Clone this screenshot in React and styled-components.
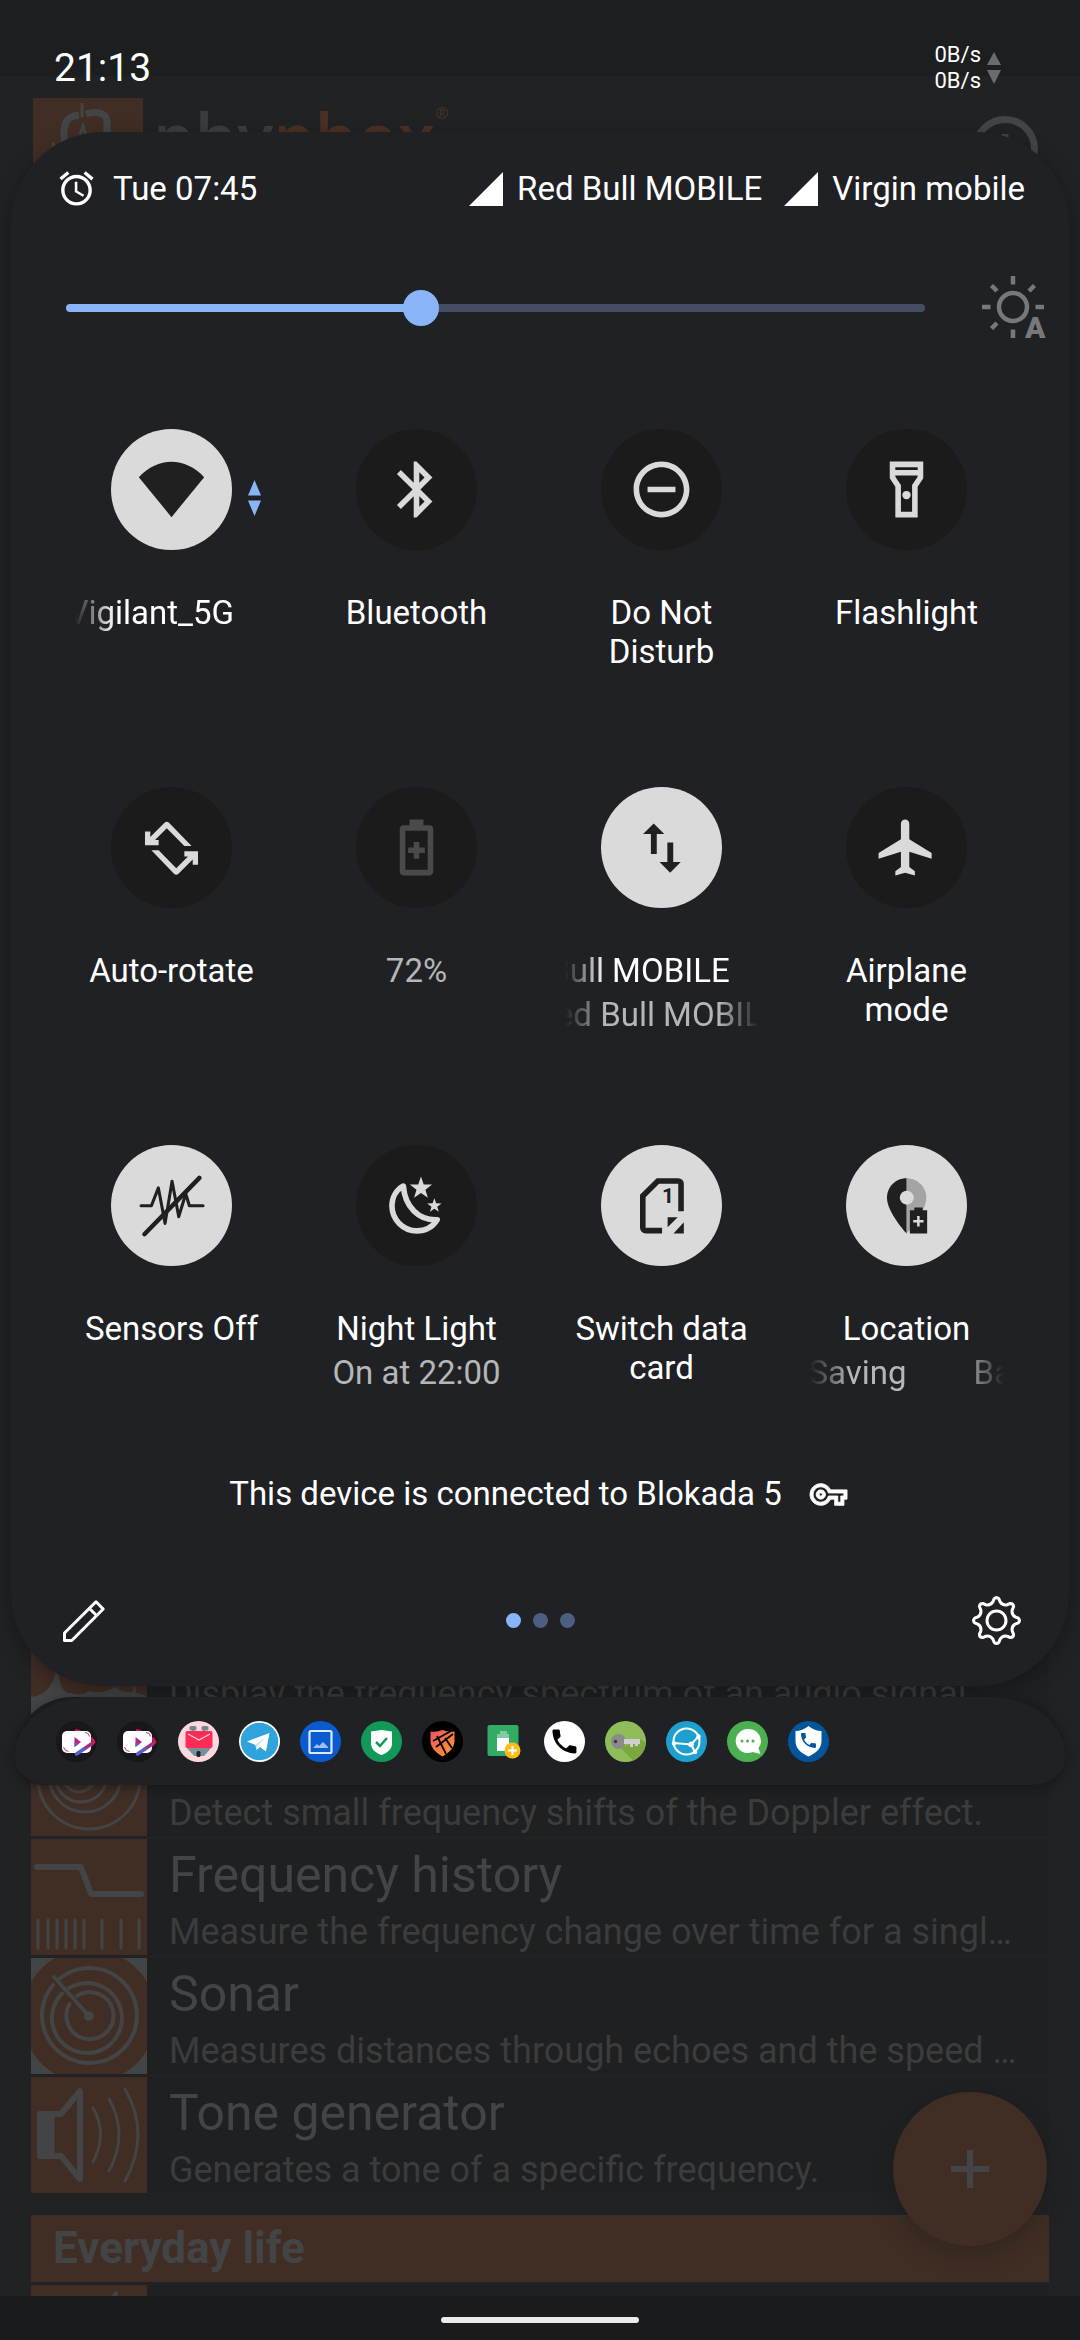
import React, { useState } from "react";
import styled, { createGlobalStyle } from "styled-components";

const c = {
  app: "#202223",
  card: "#1f2021",
  bar: "#1c1e1f",
  nav: "#1a1b1c",
  panel: "#202124",
  orange: "#402e24",
  dimTitle: "#434445",
  dimText: "#3b3c3d",
  accent: "#8ab4f8",
  on: "#dadada",
  off: "#1b1b1c",
  ink: "#202020",
};

const GlobalStyle = createGlobalStyle`
  * { box-sizing: border-box; }
  body {
    margin: 0;
    background: ${c.app};
    color: #fff;
    font-family: Roboto, "Noto Sans", sans-serif;
  }
  button, input { font: inherit; color: inherit; }
  svg { display: block; flex: none; overflow: visible; }
`;

const Screen = styled.div`
  position: relative;
  display: grid;
  grid-template-columns: minmax(0, 1fr);
  min-height: 100vh;
  overflow: hidden;
`;

/* ---------- App behind the shade ---------- */

const AppLayer = styled.div`
  display: flex;
  flex-direction: column;
  justify-content: space-between;
  background: ${c.app};
`;

const StatusBackdrop = styled.div`
  height: 76px;
  background: ${c.bar};
`;

const AppHeader = styled.header`
  display: flex;
  align-items: flex-start;
  gap: 10px;
  padding: 22px 42px 0 33px;
`;

const Brand = styled.h1`
  flex: 1;
  display: flex;
  margin: 0;
  font: 600 67px/76px "Open Sans", sans-serif;
  color: ${c.dimText};
`;

const BrandAccent = styled.span`
  color: #4a3024;
`;

const BrandMark = styled.span`
  font-size: 16px;
  line-height: 30px;
  color: #4a3024;
`;

const InfoButton = styled.button`
  margin-top: 18px;
  padding: 0;
  border: 0;
  background: none;
`;

const Experiments = styled.ul`
  display: flex;
  flex-direction: column;
  gap: 3px;
  margin: 0;
  padding: 0 31px;
  list-style: none;
`;

const Experiment = styled.li`
  display: flex;
  gap: 22px;
  height: ${(p) => (p.$peek ? 11 : 116)}px;
  overflow: hidden;
  background: ${c.card};
`;

const ExperimentText = styled.div`
  flex: 1;
  min-width: 0;
  padding: 6px 20px 0 0;
`;

const ExperimentTitle = styled.h3`
  margin: 0;
  font-size: 50px;
  line-height: 60px;
  font-weight: 400;
  color: ${c.dimTitle};
`;

const ExperimentInfo = styled.p`
  margin: 0;
  font-size: 36px;
  line-height: 54px;
  color: ${c.dimText};
  white-space: nowrap;
  overflow: hidden;
  text-overflow: ellipsis;
`;

const SectionTitle = styled.h2`
  margin: 19px 0 0;
  padding: 0 22px;
  font-size: 44px;
  line-height: 67px;
  font-weight: 700;
  color: ${c.dimTitle};
  background: ${c.orange};
`;

const SectionItem = styled.li``;

const AddButton = styled.button`
  position: absolute;
  right: 33px;
  bottom: 94px;
  display: grid;
  place-items: center;
  width: 154px;
  height: 154px;
  padding: 0;
  border: 0;
  border-radius: 50%;
  background: ${c.orange};
  box-shadow: 0 10px 22px rgba(20, 20, 20, 0.3);
`;

const NavBar = styled.div`
  display: flex;
  justify-content: center;
  align-items: center;
  height: 44px;
  padding-top: 4px;
  background: ${c.nav};
`;

const NavHandle = styled.div`
  width: 198px;
  height: 6px;
  border-radius: 3px;
  background: #ececec;
`;

/* ---------- Shade ---------- */

const Shade = styled.main`
  position: absolute;
  inset: 0;
  display: flex;
  flex-direction: column;
  padding: 0 11px;
`;

const StatusRow = styled.div`
  display: flex;
  justify-content: space-between;
  align-items: center;
  height: 132px;
  padding: 4px 68px 0 43px;
`;

const Clock = styled.time`
  font-size: 39px;
  line-height: 46px;
`;

const Traffic = styled.div`
  display: flex;
  align-items: center;
  gap: 6px;
  font-size: 22px;
  line-height: 26px;
`;

const Panel = styled.section`
  padding: 36px 0 41px;
  border-radius: 92px;
  background: ${c.panel};
  box-shadow: 0 6px 18px rgba(10, 10, 12, 0.35);
  font-size: 33px;
  line-height: 40px;
`;

const PanelHeader = styled.header`
  display: flex;
  justify-content: space-between;
  align-items: center;
  padding: 0 44px 0 45px;
`;

const Inline = styled.div`
  display: flex;
  align-items: center;
  gap: ${(p) => p.$gap}px;
`;

const BrightnessRow = styled.div`
  display: flex;
  align-items: center;
  gap: 57px;
  padding: 67px 24px 90px 55px;
`;

const Brightness = styled.input`
  flex: 1;
  min-width: 0;
  height: 36px;
  margin: 0;
  appearance: none;
  background: none;

  &::-webkit-slider-runnable-track {
    height: 8px;
    border-radius: 4px;
    background: linear-gradient(
      to right,
      ${c.accent} ${(p) => p.value}%,
      #444d63 ${(p) => p.value}%
    );
  }

  &::-webkit-slider-thumb {
    appearance: none;
    width: 36px;
    height: 36px;
    margin-top: -14px;
    border-radius: 50%;
    background: ${c.accent};
  }
`;

const IconButton = styled.button`
  display: grid;
  place-items: center;
  min-width: 49px;
  padding: 0;
  border: 0;
  background: none;
  justify-self: ${(p) => p.$align || "auto"};
`;

const Tiles = styled.div`
  display: grid;
  grid-template-columns: repeat(4, 1fr);
  row-gap: 111px;
  padding: 0 40px 0 38px;
`;

const TileButton = styled.button`
  display: flex;
  flex-direction: column;
  align-items: center;
  justify-content: flex-start;
  gap: 43px;
  min-width: 0;
  min-height: 247px;
  padding: 0;
  border: 0;
  background: none;
`;

const TileDisc = styled.span`
  position: relative;
  display: grid;
  place-items: center;
  width: 121px;
  height: 121px;
  border-radius: 50%;
  background: ${(p) => (p.$on ? c.on : c.off)};
  color: ${(p) => (p.$dim ? "#4a4a4b" : p.$on ? c.ink : c.on)};
`;

const Activity = styled.span`
  position: absolute;
  left: 137px;
  top: 51px;
  color: ${c.accent};
`;

const TileText = styled.span`
  display: flex;
  flex-direction: column;
  gap: 5px;
  width: 194px;
`;

const TileLabel = styled.span`
  line-height: 39px;
  color: ${(p) => (p.$muted ? "#b5b6b7" : "#fff")};
`;

const fades = {
  left: "linear-gradient(to right, transparent, #000 40px)",
  both: "linear-gradient(to right, transparent, #000 40px, #000 calc(100% - 40px), transparent)",
};

const Marquee = styled(TileLabel)`
  display: flex;
  overflow: hidden;
  white-space: nowrap;
  mask-image: ${(p) => fades[p.$fade]};
`;

const MarqueeTrack = styled.span`
  display: flex;
  flex: none;
  gap: 67px;
  margin-left: -${(p) => p.$scrolled}px;
`;

const VpnNote = styled.button`
  display: flex;
  justify-content: center;
  align-items: center;
  gap: 28px;
  width: 100%;
  margin: 82px 0;
  padding: 0 4px 0 0;
  border: 0;
  background: none;
`;

const PanelFooter = styled.footer`
  display: grid;
  grid-template-columns: 1fr auto 1fr;
  align-items: center;
  padding: 0 48px;
`;

const Pages = styled.div`
  display: flex;
  gap: 12px;
`;

const PageDot = styled.span`
  width: 15px;
  height: 15px;
  border-radius: 50%;
  background: ${(p) => (p.$current ? c.accent : "#4d5f80")};
`;

const Tray = styled.section`
  margin: 11px 3px 0;
  border-radius: 60px 60px 30px 30px;
  background: #1b1c20;
  box-shadow: 0 3px 8px rgba(16, 16, 20, 0.5);
`;

const TrayIcons = styled.div`
  display: flex;
  align-items: center;
  gap: 20px;
  height: 88px;
  padding: 0 42px;
  border-radius: 76px 76px 36px 36px / 60px 60px 28px 28px;
  background: ${c.panel};
`;

/* ---------- Icons ---------- */

const Glyph = ({ size = 67, children }) => (
  <svg width={size} height={size} viewBox="0 0 24 24" fill="currentColor" aria-hidden="true">
    {children}
  </svg>
);

const starPoints = (cx, cy, r) =>
  Array.from({ length: 10 }, (_, i) => {
    const a = (Math.PI / 5) * i - Math.PI / 2;
    const d = i % 2 ? r * 0.4 : r;
    return `${(cx + d * Math.cos(a)).toFixed(2)},${(cy + d * Math.sin(a)).toFixed(2)}`;
  }).join(" ");

const polar = (cx, r, deg) => {
  const a = (deg * Math.PI) / 180;
  return `${(cx + r * Math.cos(a)).toFixed(2)} ${(cx + r * Math.sin(a)).toFixed(2)}`;
};

const gearPath = (() => {
  let d = "";
  for (let i = 0; i < 8; i++) {
    const a = i * 45 - 90;
    d += `${i ? "L" : "M"}${polar(24.5, 22, a - 6)}`;
    d += `Q${polar(24.5, 24, a)} ${polar(24.5, 22, a + 6)}`;
    d += `L${polar(24.5, 19, a + 11)}`;
    d += `Q${polar(24.5, 16, a + 22.5)} ${polar(24.5, 19, a + 34)}`;
  }
  return d + "Z";
})();

const AlarmIcon = () => (
  <Glyph size={41}>
    <path d="M22 5.72l-4.6-3.86-1.29 1.53 4.6 3.86L22 5.72zM7.88 3.39L6.6 1.86 2 5.71l1.29 1.53 4.59-3.85zM12.5 8H11v6l4.75 2.85.75-1.23-4-2.37V8zM12 4c-4.97 0-9 4.03-9 9s4.02 9 9 9c4.97 0 9-4.03 9-9s-4.03-9-9-9zm0 16c-3.87 0-7-3.13-7-7s3.13-7 7-7 7 3.13 7 7-3.13 7-7 7z" />
  </Glyph>
);

const SignalIcon = () => (
  <svg width="34" height="34" viewBox="0 0 34 34" aria-hidden="true">
    <path d="M34 0V34H0z" fill="#fff" />
  </svg>
);

const TrafficIcon = () => (
  <svg width="14" height="32" viewBox="0 0 14 32" fill="#6b6c6d" aria-hidden="true">
    <path d="M7 0l7 13H0zM0 18h14L7 32z" />
  </svg>
);

const ActivityIcon = () => (
  <svg width="13" height="36" viewBox="0 0 13 36" fill="currentColor" aria-hidden="true">
    <path d="M6.500 0L13 15.500H0zM0 20.500h13L6.500 36z" />
  </svg>
);

const AutoBrightnessIcon = () => (
  <svg width="63" height="63" viewBox="0 0 63 63" fill="none" stroke="#77787a" strokeWidth="4.500" aria-hidden="true">
    <circle cx="31" cy="31" r="14" />
    <path d="M31 0v8.500M31 53.500v8.500M0 31h8.500M53.500 31H62M9.500 9.500l5.500 5.500M52.500 9.500L47 15M9.500 52.500L15 47" />
    <text x="43" y="62" fontSize="30" fontWeight="900" fill="#77787a" stroke="none" fontFamily="Roboto, sans-serif">
      A
    </text>
  </svg>
);

const WifiIcon = () => (
  <Glyph>
    <path d="M12 21.900L.3 7.600C3.700 4 7.800 2.100 12 2.100S20.300 4 23.700 7.600z" />
  </Glyph>
);

const BluetoothIcon = () => (
  <Glyph>
    <path d="M17.71 7.71L12 2h-1v7.59L6.41 5 5 6.41 10.59 12 5 17.59 6.41 19 11 14.41V22h1l5.71-5.71-4.3-4.29 4.3-4.29zM13 5.83l1.88 1.88L13 9.59V5.83zm1.88 10.46L13 18.17v-3.76l1.88 1.88z" />
  </Glyph>
);

const DndIcon = () => (
  <Glyph>
    <path d="M12 2C6.480 2 2 6.480 2 12s4.480 10 10 10 10-4.480 10-10S17.520 2 12 2zm0 18c-4.410 0-8-3.590-8-8s3.590-8 8-8 8 3.590 8 8-3.590 8-8 8zM7 11h10v2H7z" />
  </Glyph>
);

const FlashlightIcon = () => (
  <Glyph>
    <path d="M6 2v6l2 3v11h8V11l2-3V2H6zm10 2v1H8V4h8zm-2 6.400V20h-4v-9.600l-2-3V7h8v.4l-2 3z" />
    <circle cx="12" cy="14" r="1.500" />
  </Glyph>
);

const rotateHalf =
  "M19.200 11.500h-2.600L10.300 5.100 6.100 9.300H7.400V11.200H2.500V6.300H4.400V8.200L9.500 3.100q.8-.7 1.600 0z";

const RotateIcon = () => (
  <Glyph>
    <path d={rotateHalf} />
    <path d={rotateHalf} transform="rotate(180 12 12.250)" />
  </Glyph>
);

const BatteryIcon = () => (
  <Glyph>
    <path d="M16.700 4H14.500V2h-5v2H7.300C6.600 4 6 4.600 6 5.300v15.400C6 21.400 6.600 22 7.300 22h9.400c.7 0 1.300-.6 1.300-1.300V5.300C18 4.600 17.400 4 16.700 4zM16 20H8V6h8v14zM11 16h2v-2h2v-2h-2v-2h-2v2H9v2h2z" />
  </Glyph>
);

const DataIcon = () => (
  <Glyph>
    <path d="M9.200 3.400L13 7.200H10.300V14.300H8.200V7.200H5.400zM15.100 21l3.800-3.800H16.200V10.200H14.100V17.200H11.300z" />
  </Glyph>
);

const AirplaneIcon = () => (
  <Glyph>
    <path d="M21 16v-2l-8-5V3.500c0-.83-.67-1.500-1.500-1.500S10 2.670 10 3.500V9l-8 5v2l8-2.500V19l-2 1.500V22l3.500-1 3.500 1v-1.500L13 19v-5.500l8 2.500z" />
  </Glyph>
);

const SensorsIcon = () => (
  <Glyph>
    <g fill="none" stroke="currentColor" strokeLinecap="round" strokeLinejoin="round">
      <path strokeWidth="1.100" d="M1.100 12.100H4.800L7.300 5.700 9.700 18.400 12.200 3.300 14.600 16 17.100 7.800 18.400 12.100H23.300" />
      <path strokeWidth="1.600" d="M2.300 22.300L22 2.100" />
    </g>
  </Glyph>
);

const NightIcon = () => (
  <Glyph>
    <path
      d="M7.300 5C4.700 6.400 3.200 9.200 3.200 12.100A9 9 0 0 0 12.100 21.100C15.300 21.100 17.900 19.500 19.400 17.100 12.800 17.400 7.800 12.400 7.300 5z"
      fill="none"
      stroke="currentColor"
      strokeWidth="2"
      strokeLinejoin="round"
    />
    <polygon points={starPoints(13.6, 5.8, 4.2)} />
    <polygon points={starPoints(18.4, 12.1, 2.7)} />
  </Glyph>
);

const SimIcon = () => (
  <Glyph>
    <path
      d="M12.200 21H6.300a1 1 0 0 1-1-1V8.600L10.700 3.200H18a1 1 0 0 1 1 1V14.100"
      fill="none"
      stroke="currentColor"
      strokeWidth="2"
    />
    <path d="M14.200 16.200h3.600l-3.600 3.600zM20 18v4h-3.700z" />
    <text x="12.200" y="11" fontSize="7.500" fontWeight="700" fontFamily="Roboto, sans-serif">
      1
    </text>
  </Glyph>
);

const LocationIcon = () => (
  <Glyph>
    <path d="M12 2.200c3.900 0 7.100 3.100 7.100 7C19.100 14.400 12 22 12 22z" fill="#a4a4a4" />
    <path d="M12 2.200C8.100 2.200 5 5.300 5 9.200 5 14.400 12 22 12 22z" />
    <circle cx="12.100" cy="9.200" r="2.500" fill={c.on} />
    <path d="M13.200 13.700h1.600v-1h3v1h1.600V22h-6.200z" />
    <path d="M15.800 15.800h.9v1.400h1.400v.9h-1.400v1.400h-.9v-1.400h-1.400v-.9h1.400z" fill={c.on} />
  </Glyph>
);

const KeyIcon = () => (
  <Glyph size={37}>
    <path
      stroke="currentColor"
      strokeWidth=".6"
      d="M22 19h-6v-4h-2.680c-1.140 2.420-3.600 4-6.320 4-3.860 0-7-3.140-7-7s3.140-7 7-7c2.720 0 5.170 1.580 6.320 4H24v6h-2v4zm-4-2h2v-4h2v-2H11.940l-.23-.67C11.010 8.340 9.110 7 7 7c-2.760 0-5 2.240-5 5s2.240 5 5 5c2.110 0 4.010-1.340 4.710-3.330l.23-.67H18v4zM7 15c-1.650 0-3-1.350-3-3s1.350-3 3-3 3 1.350 3 3-1.350 3-3 3zm0-4c-.55 0-1 .45-1 1s.45 1 1 1 1-.45 1-1-.45-1-1-1z"
    />
  </Glyph>
);

const PencilIcon = () => (
  <svg width="42" height="42" viewBox="0 0 42 42" fill="none" stroke="#fff" strokeWidth="3" strokeLinejoin="round" aria-hidden="true">
    <path d="M1.500 40.500V33L33 1.800 40.200 9 8.800 40.500zM26.500 8.500L33.500 15.500" />
  </svg>
);

const GearIcon = () => (
  <svg width="49" height="49" viewBox="0 0 49 49" fill="none" stroke="#fff" strokeWidth="3" strokeLinejoin="round" aria-hidden="true">
    <path d={gearPath} />
    <circle cx="24.500" cy="24.500" r="9.500" />
  </svg>
);

/* ---------- Notification icons ---------- */

const Badge = ({ fill, label, children }) => (
  <svg width="41" height="41" viewBox="0 0 41 41" role="img" aria-label={label}>
    {fill && <circle cx="20.500" cy="20.500" r="20.500" fill={fill} />}
    {children}
  </svg>
);

const VideoBadge = () => (
  <Badge fill="#18181a" label="Video">
    <path d="M19 9.500l5 1" stroke="#e0105a" strokeWidth="3" />
    <path d="M35 17l3 4-4 4" stroke="#e0104f" strokeWidth="3" fill="none" strokeLinejoin="round" />
    <rect x="6" y="10" width="29" height="22" rx="5" fill="#fff" />
    <path d="M29 11.500q4 0 4.500 4M7.500 26q1 4 5 4.500" stroke="#d03070" strokeWidth="1" fill="none" />
    <path d="M36 22.500L28 28" stroke="#a0308a" strokeWidth="3.500" strokeLinecap="round" />
    <path d="M28 28L20.500 33" stroke="#5560c8" strokeWidth="3.500" strokeLinecap="round" />
    <path d="M18.500 16l6.500 5-6.500 5z" fill="#c0247a" />
    <path d="M18.500 21v5l4-3z" fill="#4a60d0" />
  </Badge>
);

const MailBadge = () => (
  <Badge fill="#fbd8de" label="Mail">
    <path d="M15 8v4M26 8v4" stroke="#78909c" strokeWidth="2" />
    <rect x="11.500" y="5" width="7" height="4.500" rx="1.500" fill="#78858c" />
    <rect x="23.500" y="5" width="7" height="4.500" rx="1.500" fill="#78858c" />
    <path d="M8 26h26l-8 9H16z" fill="#78909c" />
    <rect x="7.500" y="10" width="27" height="17" rx="2" fill="#ff2b55" />
    <path d="M10 13l11 6 11-6" stroke="#fbd8de" strokeWidth="1.200" fill="none" />
    <rect x="18.500" y="30" width="4" height="6" rx="1.500" fill="#222" />
  </Badge>
);

const TelegramBadge = () => (
  <Badge fill="#fff" label="Telegram">
    <circle cx="20.500" cy="20.500" r="18.800" fill="#2fa3dc" />
    <path d="M8 20.500L30.500 12l-3.500 18.500-6-4.500-3.500 3-1-5z" fill="#fff" />
    <path d="M16.500 24L26.500 16l-8 9-1 4z" fill="#c4e0f0" />
  </Badge>
);

const GalleryBadge = () => (
  <Badge fill="#0b5bd0" label="Gallery">
    <rect x="9.500" y="10" width="22" height="22" rx="1.500" fill="none" stroke="#dce9ff" strokeWidth="2.200" />
    <path d="M13 27l4-4 2 2 4-4 5 5v1z" fill="#9cc2f5" />
  </Badge>
);

const ShieldBadge = () => (
  <Badge fill="#12995a" label="Protection">
    <path d="M20.500 9l10.500 1.500v12.500c0 5-5 9-10.500 11-5.500-2-10.500-6-10.500-11V10.500z" fill="#fff" />
    <path d="M15 21l4 4 7-8" stroke="#12995a" strokeWidth="2.500" fill="none" />
  </Badge>
);

const BlokadaBadge = () => (
  <Badge fill="#000" label="Blokada">
    <defs>
      <linearGradient id="flame" x1="0" y1="0" x2="1" y2="1">
        <stop offset="0" stopColor="#f0506a" />
        <stop offset="1" stopColor="#ffa01e" />
      </linearGradient>
    </defs>
    <path d="M8.500 10.500q6 1 12-1.500 6 2.500 12 1.500v9c0 7-5 12-12 16-7-4-12-9-12-16z" fill="url(#flame)" />
    <path d="M11 20L29 10M14 26L31 13M15 15l9 18M23 17l7 10" stroke="#000" strokeWidth="1.800" />
  </Badge>
);

const BatteryBadge = () => (
  <Badge label="Battery">
    <rect x="4.500" y="4" width="31" height="31" rx="2" fill="#33ab64" />
    <path d="M14 13h3v-3h7v3h2v5H14z" fill="#82cba0" />
    <rect x="14" y="17" width="12" height="13" fill="#fff" />
    <circle cx="29.500" cy="29.500" r="8" fill="#fdbc18" />
    <path d="M29.500 25v9M25 29.500h9" stroke="#fff" strokeWidth="2" />
  </Badge>
);

const handset =
  "M6.620 10.790c1.440 2.830 3.760 5.140 6.590 6.590l2.200-2.200c.27-.27.67-.36 1.020-.24 1.120.37 2.330.57 3.570.57.55 0 1 .45 1 1V20c0 .55-.45 1-1 1-9.390 0-17-7.610-17-17 0-.55.45-1 1-1h3.500c.55 0 1 .45 1 1 0 1.250.2 2.450.57 3.570.11.35.03.74-.25 1.020l-2.200 2.200z";

const PhoneBadge = () => (
  <Badge fill="#fff" label="Phone">
    <path d={handset} fill="#000" transform="translate(4.500 4.500) scale(1.330)" />
  </Badge>
);

const PasswordBadge = () => (
  <Badge fill="#8fbd5a" label="Passwords">
    <path d="M16 27L28 39.500A20.500 20.500 0 0 0 41 22L35 18z" fill="#78a83e" />
    <circle cx="13.500" cy="20.500" r="7.500" fill="#8b8b8b" />
    <circle cx="10.500" cy="20.500" r="1.800" fill="#3c3c3c" />
    <path d="M19 18h16v5h-2v2h-3v-2h-2v3h-3v-3h-6z" fill="#cfcfcf" />
  </Badge>
);

const SyncBadge = () => (
  <Badge fill="#1d9fd0" label="Sync">
    <g fill="none" stroke="#fff" strokeWidth="2">
      <circle cx="20.500" cy="20.500" r="13" />
      <path d="M7.500 22L25 23.500 33 15M25 23.500L29 31" />
    </g>
    <g fill="#fff">
      <circle cx="25" cy="23.500" r="2.800" />
      <circle cx="32.500" cy="15.500" r="2.200" />
      <circle cx="29" cy="31" r="2.200" />
      <circle cx="8" cy="22.500" r="2.200" />
    </g>
  </Badge>
);

const ChatBadge = () => (
  <Badge fill="#4cb050" label="Messages">
    <path d="M20.500 8a12 12 0 1 0 5 23l8 2-2-6A12 12 0 0 0 20.500 8z" fill="#fff" />
    <g fill="#4cb050">
      <circle cx="15" cy="20" r="1.500" />
      <circle cx="20.500" cy="20" r="1.500" />
      <circle cx="26" cy="20" r="1.500" />
    </g>
  </Badge>
);

const CallerBadge = () => (
  <Badge fill="#03569b" label="Caller protection">
    <path d="M20.500 5q6 5 13 5v10c0 8-6 12-13 15.500C13.500 32 7.500 28 7.500 20V10q7 0 13-5z" fill="#fff" />
    <path d={handset} fill="#03569b" transform="translate(10.500 9.500) scale(.830)" />
  </Badge>
);

/* ---------- Experiment artwork ---------- */

const Art = ({ corners, children }) => (
  <svg width="116" height="116" viewBox="0 0 116 116" fill="none" stroke={c.dimTitle} strokeLinecap="round" strokeLinejoin="round" aria-hidden="true">
    <rect width="116" height="116" fill={corners ? c.dimTitle : c.orange} stroke="none" />
    {children}
  </svg>
);

const SpectrumArt = () => (
  <Art>
    <path
      d="M0 96Q24 94 26 60Q28 94 40 92Q50 96 58 90Q70 94 84 86Q96 94 102 90L103 70 105 92 116 95V116H0z"
      fill={c.dimTitle}
      stroke="none"
    />
  </Art>
);

const DopplerArt = () => (
  <Art>
    <circle cx="48" cy="56" r="16" strokeWidth="3" />
    <circle cx="50" cy="56" r="26" strokeWidth="3" />
    <circle cx="54" cy="56" r="36" strokeWidth="3" />
    <circle cx="58" cy="58" r="51" strokeWidth="3" />
  </Art>
);

const HistoryArt = () => (
  <Art>
    <path d="M6 28H50L60 55H110" strokeWidth="6" />
    <path d="M7 81v28M17 81v28M26 81v28M35 81v28M44 81v28M53 81v28M71 81v28M90 81v28M108 81v28" strokeWidth="3" />
  </Art>
);

const SonarArt = () => (
  <svg width="116" height="116" viewBox="0 0 116 116" fill="none" stroke={c.dimTitle} strokeLinecap="round" aria-hidden="true">
    <rect width="116" height="116" fill={c.dimTitle} stroke="none" />
    <path d="M24 0H92A67 67 0 0 1 116 24V92A67 67 0 0 1 92 116H24A67 67 0 0 1 0 92V24A67 67 0 0 1 24 0z" fill={c.orange} stroke="none" />
    <g strokeWidth="4">
      <path d="M38.500 46A23.500 23.500 0 1 0 46 38" />
      <path d="M31 35.500A35 35 0 1 0 38 30" />
      <path d="M22 27A47.500 47.500 0 1 0 28 21" />
      <path d="M23 19L58 58" />
    </g>
    <circle cx="58" cy="58" r="5" fill={c.dimTitle} stroke="none" />
  </svg>
);

const ToneArt = () => (
  <Art>
    <path d="M8 36H22V80H8z" fill={c.dimTitle} strokeWidth="3" />
    <path d="M9 37H30L49 14V102L30 79H9z" strokeWidth="6" />
    <path d="M62 31Q77 57 62 85M78 22Q98 57 78 94M94 12Q120 57 94 104" strokeWidth="3" />
  </Art>
);

const EverydayArt = () => (
  <Art>
    <path d="M85 8L80 16" strokeWidth="4" />
  </Art>
);

const LogoArt = () => (
  <svg width="110" height="110" viewBox="0 0 110 110" fill="none" stroke={c.dimTitle} strokeWidth="7" aria-hidden="true">
    <rect width="110" height="110" fill={c.orange} stroke="none" />
    <path d="M49 5v14" strokeWidth="3" />
    <path d="M31 70V32Q32 18 46 17M53 16Q73 11 74 24V70" />
    <path d="M44 46l6-18 6 18M20 44l4 20" strokeWidth="3" />
  </svg>
);

/* ---------- Content ---------- */

const experiments = [
  { title: "Audio Spectrum", info: "Display the frequency spectrum of an audio signal.", Icon: SpectrumArt },
  { title: "Doppler effect", info: "Detect small frequency shifts of the Doppler effect.", Icon: DopplerArt },
  { title: "Frequency history", info: "Measure the frequency change over time for a single tone.", Icon: HistoryArt },
  { title: "Sonar", info: "Measures distances through echoes and the speed of sound.", Icon: SonarArt },
  { title: "Tone generator", info: "Generates a tone of a specific frequency.", Icon: ToneArt },
];

const tiles = [
  { label: ["Vigilant_5G"], scroll: 7, fade: "left", Icon: WifiIcon, on: true, active: true },
  { label: ["Bluetooth"], Icon: BluetoothIcon },
  { label: ["Do Not Disturb"], Icon: DndIcon },
  { label: ["Flashlight"], Icon: FlashlightIcon },
  { label: ["Auto-rotate"], Icon: RotateIcon },
  { label: ["72%"], Icon: BatteryIcon, dim: true },
  {
    label: ["Red Bull MOBILE"], scroll: 80, fade: "left",
    detail: ["Red Bull MOBILE"], detailScroll: 29, Icon: DataIcon, on: true,
  },
  { label: ["Airplane mode"], Icon: AirplaneIcon },
  { label: ["Sensors Off"], Icon: SensorsIcon, on: true },
  { label: ["Night Light"], detail: ["On at 22:00"], Icon: NightIcon },
  { label: ["Switch data card"], Icon: SimIcon, on: true },
  { label: ["Location"], detail: ["Saving", "Battery"], detailScroll: 1, Icon: LocationIcon, on: true },
];

const notifications = [
  VideoBadge, VideoBadge, MailBadge, TelegramBadge, GalleryBadge, ShieldBadge, BlokadaBadge,
  BatteryBadge, PhoneBadge, PasswordBadge, SyncBadge, ChatBadge, CallerBadge,
];

function Label({ text, scroll, fade, muted }) {
  if (scroll === undefined) return <TileLabel $muted={muted}>{text[0]}</TileLabel>;
  return (
    <Marquee $muted={muted} $fade={fade}>
      <MarqueeTrack $scrolled={scroll}>
        {text.map((t, i) => (
          <span key={i}>{t}</span>
        ))}
      </MarqueeTrack>
    </Marquee>
  );
}

function Tile({ label, scroll, fade, detail, detailScroll, Icon, on, dim, active }) {
  return (
    <TileButton type="button" aria-pressed={!!on}>
      <TileDisc $on={on} $dim={dim}>
        <Icon />
        {active && (
          <Activity>
            <ActivityIcon />
          </Activity>
        )}
      </TileDisc>
      <TileText>
        <Label text={label} scroll={scroll} fade={fade} muted={dim} />
        {detail && <Label text={detail} scroll={detailScroll} fade="both" muted />}
      </TileText>
    </TileButton>
  );
}

function Background() {
  return (
    <AppLayer>
      <div>
        <StatusBackdrop />
        <AppHeader>
          <LogoArt />
          <Brand>
            phy<BrandAccent>phox</BrandAccent>
            <BrandMark>®</BrandMark>
          </Brand>
          <InfoButton type="button" aria-label="Information">
            <svg width="66" height="66" viewBox="0 0 66 66" fill="none" stroke={c.dimTitle} strokeWidth="7">
              <circle cx="33" cy="33" r="29.500" />
              <path d="M33 18v6M33 30v20" />
            </svg>
          </InfoButton>
        </AppHeader>
      </div>
      <div>
        <Experiments>
          {experiments.map(({ title, info, Icon }) => (
            <Experiment key={title}>
              <Icon />
              <ExperimentText>
                <ExperimentTitle>{title}</ExperimentTitle>
                <ExperimentInfo>{info}</ExperimentInfo>
              </ExperimentText>
            </Experiment>
          ))}
          <SectionItem>
            <SectionTitle>Everyday life</SectionTitle>
          </SectionItem>
          <Experiment $peek>
            <EverydayArt />
          </Experiment>
        </Experiments>
        <NavBar>
          <NavHandle />
        </NavBar>
      </div>
      <AddButton type="button" aria-label="Add experiment">
        <svg width="38" height="38" viewBox="0 0 38 38" stroke={c.dimTitle} strokeWidth="6">
          <path d="M19 0v38M0 19h38" />
        </svg>
      </AddButton>
    </AppLayer>
  );
}

export default function App() {
  const [level, setLevel] = useState(41);
  return (
    <Screen>
      <GlobalStyle />
      <Background />
      <Shade>
        <StatusRow>
          <Clock>21:13</Clock>
          <Traffic>
            <div>
              <div>0B/s</div>
              <div>0B/s</div>
            </div>
            <TrafficIcon />
          </Traffic>
        </StatusRow>
        <Panel>
          <PanelHeader>
            <Inline $gap={16}>
              <AlarmIcon />
              <span>Tue 07:45</span>
            </Inline>
            <Inline $gap={22}>
              <Inline $gap={14}>
                <SignalIcon />
                <span>Red Bull MOBILE</span>
              </Inline>
              <Inline $gap={14}>
                <SignalIcon />
                <span>Virgin mobile</span>
              </Inline>
            </Inline>
          </PanelHeader>
          <BrightnessRow>
            <Brightness
              type="range"
              min="0"
              max="100"
              value={level}
              aria-label="Display brightness"
              onChange={(e) => setLevel(Number(e.target.value))}
            />
            <IconButton type="button" aria-label="Automatic brightness">
              <AutoBrightnessIcon />
            </IconButton>
          </BrightnessRow>
          <Tiles>
            {tiles.map((tile) => (
              <Tile key={tile.label[0]} {...tile} />
            ))}
          </Tiles>
          <VpnNote type="button">
            <span>This device is connected to Blokada 5</span>
            <KeyIcon />
          </VpnNote>
          <PanelFooter>
            <IconButton type="button" aria-label="Edit tiles" $align="start">
              <PencilIcon />
            </IconButton>
            <Pages>
              <PageDot $current />
              <PageDot />
              <PageDot />
            </Pages>
            <IconButton type="button" aria-label="Settings" $align="end">
              <GearIcon />
            </IconButton>
          </PanelFooter>
        </Panel>
        <Tray aria-label="Notifications">
          <TrayIcons>
            {notifications.map((Icon, i) => (
              <Icon key={i} />
            ))}
          </TrayIcons>
        </Tray>
      </Shade>
    </Screen>
  );
}
